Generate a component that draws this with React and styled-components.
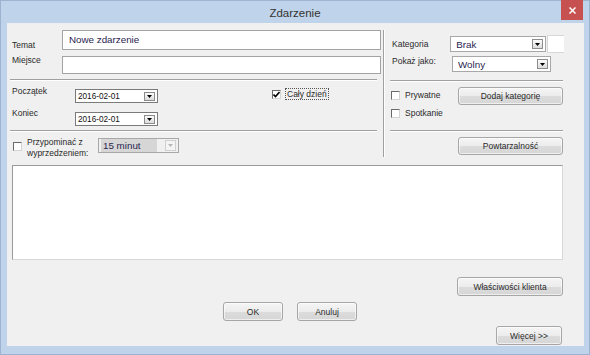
import React from 'react';
import styled, { createGlobalStyle } from 'styled-components';

const Global = createGlobalStyle`
  html, body { margin: 0; padding: 0; background: #bfd3ea; }
  body { width: 590px; height: 355px; overflow: hidden; font-family: 'Liberation Sans', Arial, sans-serif; }
  * { box-sizing: border-box; }
`;

const Window = styled.div`
  width: 590px;
  height: 355px;
  background: #bfd3ea;
  border: 1px solid #9cb4d0;
  display: flex;
  flex-direction: column;
`;

const TitleBar = styled.div`
  height: 22px;
  display: grid;
  grid-template-columns: 1fr auto 1fr;
  align-items: center;
`;

const Title = styled.div`
  grid-column: 2;
  font-family: 'Liberation Sans', Arial, sans-serif;
  font-size: 11.5px;
  color: #333;
  margin-top: 1px;
`;

const CloseButton = styled.div`
  grid-column: 3;
  justify-self: end;
  align-self: start;
  width: 22px;
  height: 20px;
  margin-top: -1px;
  margin-right: 6px;
  background: #c75050;
  color: #fff;
  display: flex;
  align-items: center;
  justify-content: center;
`;

const Client = styled.div`
  flex: 1;
  margin: 0 5px 8px 6px;
  background: #f0f0f0;
  display: flex;
  flex-direction: column;
`;

const TopSection = styled.div`
  display: flex;
  margin: 6px 0 0 3px;
  height: 128px;
`;

const LeftPanel = styled.div`
  width: 373px;
  display: flex;
  flex-direction: column;
`;

const VDivider = styled.div`
  width: 2px;
  margin-top: 1px;
  border-left: 1px solid #a0a0a0;
  border-right: 1px solid #ffffff;
`;

const RightPanel = styled.div`
  width: 179px;
  padding-left: 5px;
  display: flex;
  flex-direction: column;
`;

const Row = styled.div`
  display: flex;
  align-items: flex-start;
  margin-top: ${p => p.$mt || 0}px;
`;

const Label = styled.div`
  font-size: 8.5px;
  line-height: 10px;
  color: #2a2a2a;
  width: ${p => p.$w}px;
  padding-left: 2px;
  margin-top: ${p => p.$mt || 0}px;
  white-space: nowrap;
`;

const TextInput = styled.div`
  width: ${p => p.$w}px;
  height: ${p => p.$h}px;
  margin-top: ${p => p.$mt || 0}px;
  background: #fff;
  border: 1px solid #a3a3a3;
  font-family: 'Liberation Sans', Arial, sans-serif;
  font-size: 9.8px;
  color: #2a2550;
  display: flex;
  align-items: center;
  padding-left: 6px;
  padding-bottom: 1px;
`;

const Separator = styled.div`
  width: ${p => p.$w}px;
  height: 2px;
  margin-top: ${p => p.$mt || 0}px;
  border-top: 1px solid #a0a0a0;
  border-bottom: 1px solid #ffffff;
`;

const Combo = styled.div`
  width: ${p => p.$w}px;
  height: ${p => p.$h}px;
  margin-top: ${p => p.$mt || 0}px;
  background: ${p => (p.$disabled ? '#f0f0f0' : '#fff')};
  border: 1px solid ${p => (p.$dark ? '#7a7a7a' : '#a8a8a8')};
  display: flex;
  align-items: center;
  justify-content: space-between;
  padding: 0 2px 0 ${p => p.$pl || 4}px;
  font-family: 'Liberation Sans', Arial, sans-serif;
  font-size: ${p => (p.$big ? 9.8 : 8.2)}px;
  color: ${p => (p.$big ? '#2a2550' : '#111')};
`;

const ComboText = styled.span`
  background: ${p => (p.$selected ? '#d6d6d6' : 'transparent')};
  padding: ${p => (p.$selected ? '1px 16px 1px 2px' : '0')};
  margin-left: ${p => (p.$selected ? -2 : 0)}px;
`;

const ArrowBox = styled.div`
  width: 11px;
  height: ${p => p.$h || 10}px;
  border: 1px solid ${p => (p.$disabled ? '#d0d0d0' : '#8c8c8c')};
  background: ${p => (p.$disabled ? '#f4f4f4' : 'linear-gradient(#fbfbfb, #dcdcdc)')};
  display: flex;
  align-items: center;
  justify-content: center;
`;

const Arrow = ({ disabled }) => (
  <svg width="5" height="3" viewBox="0 0 5 3">
    <path d="M0 0H5L2.5 3Z" fill={disabled ? '#b8b8b8' : '#000'} />
  </svg>
);

const ColorBox = styled.div`
  width: 17px;
  height: 18px;
  margin: -1px 0 0 1px;
  background: #fff;
  border: 1px solid #d8d8d8;
  border-right: none;
`;

const Check = styled.div`
  width: 9px;
  height: 9px;
  flex: none;
  background: #fff;
  border: 1px solid;
  border-color: #6a6a6a #d4d4d4 #d4d4d4 #6a6a6a;
  margin-left: ${p => p.$ml || 0}px;
  margin-top: ${p => p.$mt || 0}px;
  display: flex;
  align-items: center;
  justify-content: center;
`;

const CheckRow = styled.div`
  display: flex;
  align-items: center;
  height: 10px;
  margin-top: ${p => p.$mt || 0}px;
  margin-left: ${p => p.$ml || 0}px;
`;

const CheckLabel = styled.span`
  font-size: 8.5px;
  line-height: 10px;
  color: #2a2a2a;
  margin-left: ${p => p.$ml || 5}px;
  white-space: nowrap;
`;

const FocusLabel = styled.span`
  font-size: 8.5px;
  line-height: 10px;
  color: #2a2a2a;
  margin-left: 4px;
  padding: 0 1px;
  border: 1px dotted #555;
  white-space: nowrap;
`;

const MultiLabel = styled.div`
  font-size: 8.5px;
  line-height: 11px;
  color: #2a2a2a;
  width: ${p => p.$w}px;
  margin-left: ${p => p.$ml || 0}px;
  margin-top: ${p => p.$mt || 0}px;
`;

const Column = styled.div`
  display: flex;
  flex-direction: column;
  width: ${p => p.$w}px;
`;

const Button = styled.div`
  width: ${p => p.$w}px;
  height: ${p => p.$h || 19}px;
  margin-top: ${p => p.$mt || 0}px;
  margin-left: ${p => p.$ml || 0}px;
  margin-right: ${p => p.$mr || 0}px;
  align-self: ${p => p.$align || 'auto'};
  border: 1px solid #a6a6a6;
  border-radius: 3px;
  background: linear-gradient(#f5f5f5 0%, #ececec 50%, #dcdcdc 51%, #d6d6d6 100%);
  box-shadow: inset 0 0 0 1px rgba(255, 255, 255, 0.6);
  display: flex;
  align-items: center;
  justify-content: center;
  font-size: 8.5px;
  color: #2a2a2a;
  white-space: nowrap;
`;

const TextArea = styled.div`
  width: 551px;
  height: 95px;
  margin: 8px 0 0 5px;
  background: #fff;
  border: 1px solid;
  border-color: #9a9a9a #d8d8d8 #d8d8d8 #9a9a9a;
`;

const ButtonRow = styled.div`
  display: flex;
  gap: 14px;
  padding-left: 216px;
  margin-top: 6px;
`;

const CheckMark = () => (
  <svg width="7" height="7" viewBox="0 0 7 7">
    <path d="M0.5 3.5L2.5 5.5L6.5 1" stroke="#000" strokeWidth="1.6" fill="none" />
  </svg>
);

export default function App() {
  return (
    <>
      <Global />
      <Window>
        <TitleBar>
          <Title>Zdarzenie</Title>
          <CloseButton>
            <svg width="7" height="7" viewBox="0 0 7 7">
              <path d="M0.5 0.5L6.5 6.5M6.5 0.5L0.5 6.5" stroke="#fff" strokeWidth="1.5" />
            </svg>
          </CloseButton>
        </TitleBar>
        <Client>
          <TopSection>
            <LeftPanel>
              <Row $mt={1}>
                <Label $w={52} $mt={10}>Temat</Label>
                <TextInput $w={319} $h={20}>Nowe zdarzenie</TextInput>
              </Row>
              <Row $mt={6}>
                <Label $w={52} $mt={-1}>Miejsce</Label>
                <TextInput $w={319} $h={18} />
              </Row>
              <Separator $w={367} $mt={5} />
              <Row>
                <Column $w={148}>
                  <Row $mt={5}>
                    <Label $w={65}>Początek</Label>
                    <Combo $w={83} $h={14} $mt={3} $dark $pl={2}>
                      <span>2016-02-01</span>
                      <ArrowBox $h={9}><Arrow /></ArrowBox>
                    </Combo>
                  </Row>
                  <Row $mt={5}>
                    <Label $w={65}>Koniec</Label>
                    <Combo $w={83} $h={14} $mt={4} $dark $pl={2}>
                      <span>2016-02-01</span>
                      <ArrowBox $h={9}><Arrow /></ArrowBox>
                    </Combo>
                  </Row>
                </Column>
                <CheckRow $mt={8} $ml={114}>
                  <Check><CheckMark /></Check>
                  <FocusLabel>Cały dzień</FocusLabel>
                </CheckRow>
              </Row>
              <Separator $w={367} $mt={4} />
              <Row $mt={0}>
                <Check $ml={3} $mt={10} />
                <MultiLabel $w={71} $ml={5} $mt={5}>Przypominać z<br />wyprzedzeniem:</MultiLabel>
                <Combo $w={81} $h={15} $mt={6} $big $disabled $pl={4}>
                  <ComboText $selected>15 minut</ComboText>
                  <ArrowBox $h={11} $disabled><Arrow disabled /></ArrowBox>
                </Combo>
              </Row>
            </LeftPanel>
            <VDivider />
            <RightPanel>
              <Row $mt={7}>
                <Label $w={62} $mt={3}>Kategoria</Label>
                <Combo $w={99} $h={16} $big $pl={5}>
                  <span>Brak</span>
                  <ArrowBox><Arrow /></ArrowBox>
                </Combo>
                <ColorBox />
              </Row>
              <Row $mt={3}>
                <Label $w={62}>Pokaż jako:</Label>
                <Combo $w={99} $h={16} $big $pl={5}>
                  <span>Wolny</span>
                  <ArrowBox><Arrow /></ArrowBox>
                </Combo>
              </Row>
              <Separator $w={173} $mt={8} />
              <Row>
                <Column $w={68}>
                  <CheckRow $mt={8}>
                    <Check $ml={1} />
                    <CheckLabel>Prywatne</CheckLabel>
                  </CheckRow>
                  <CheckRow $mt={8}>
                    <Check $ml={1} />
                    <CheckLabel>Spotkanie</CheckLabel>
                  </CheckRow>
                </Column>
                <Button $w={105} $h={18} $mt={5}>Dodaj kategorię</Button>
              </Row>
              <Separator $w={173} $mt={12} />
              <Button $w={105} $h={18} $mt={5} $ml={68}>Powtarzalność</Button>
            </RightPanel>
          </TopSection>
          <TextArea />
          <Button $w={106} $mt={17} $mr={21} $align="flex-end">Właściwości klienta</Button>
          <ButtonRow>
            <Button $w={60}>OK</Button>
            <Button $w={60}>Anuluj</Button>
          </ButtonRow>
          <Button $w={66} $mt={5} $mr={22} $align="flex-end">Więcej &gt;&gt;</Button>
        </Client>
      </Window>
    </>
  );
}
